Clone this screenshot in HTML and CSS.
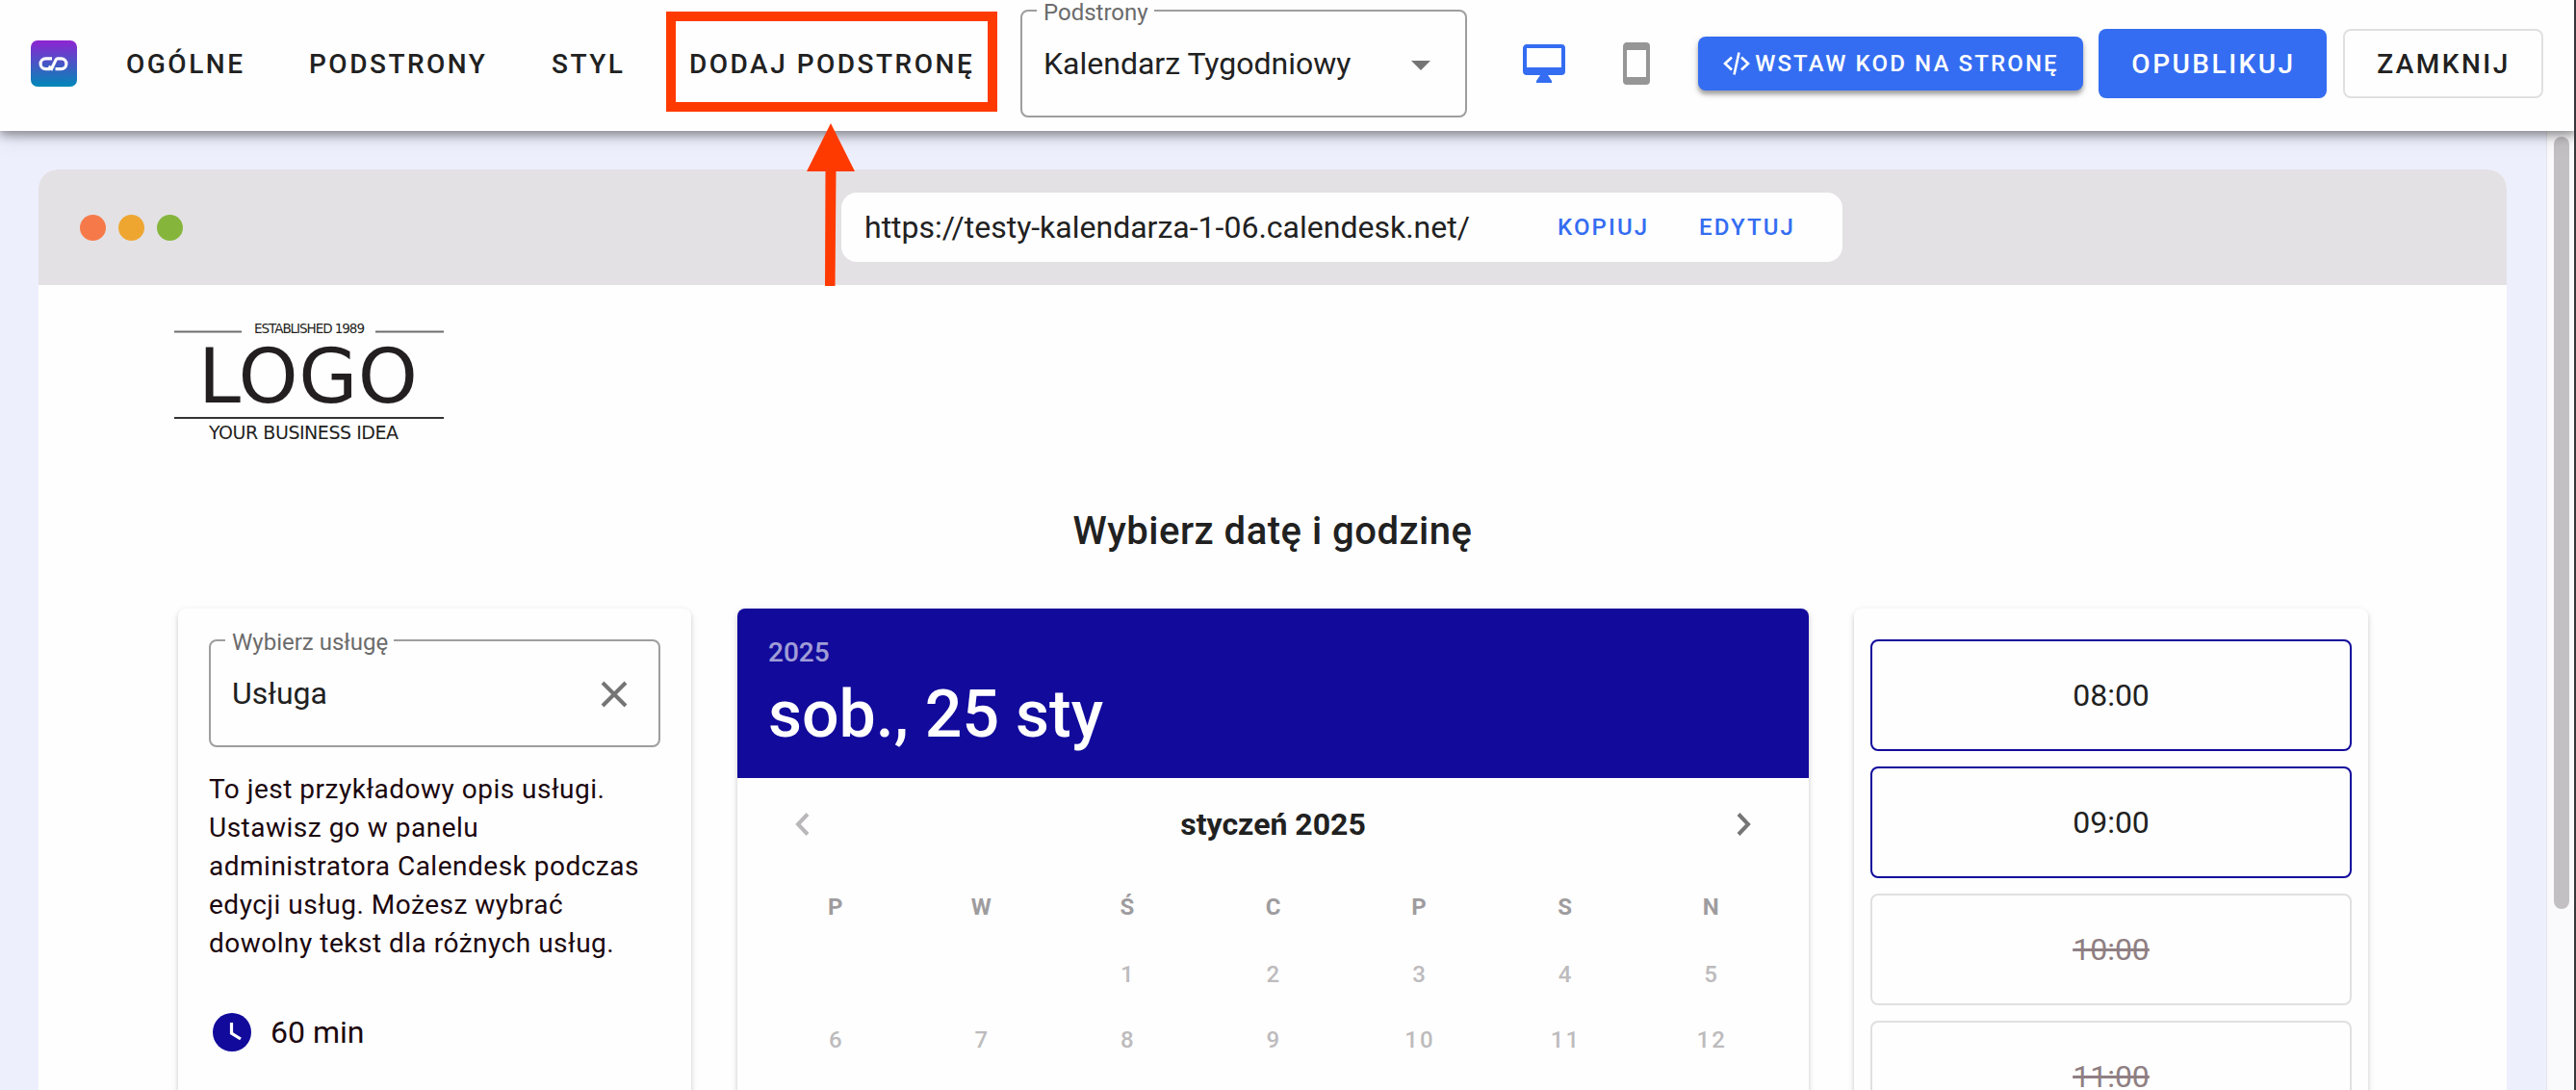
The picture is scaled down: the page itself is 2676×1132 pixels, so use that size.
FILE: index.html
```html
<!DOCTYPE html>
<html lang="pl">
<head>
<meta charset="utf-8">
<title>Calendesk</title>
<link rel="stylesheet" href="styles.css">
</head>
<body>
<header class="topbar">
  <svg class="brand" viewBox="0 0 48 48">
    <defs><linearGradient id="g" x1="0" y1="0" x2="0" y2="1"><stop offset="0" stop-color="#8e24d2"/><stop offset="1" stop-color="#0088b8"/></linearGradient></defs>
    <rect width="48" height="48" rx="7" fill="url(#g)"/>
    <path d="M22 18.800H15.500a5.400 5.400 0 0 0 0 10.800H19L20.500 26.500M20.800 31 26.200 19.900c.4-.8.900-1.100 1.800-1.100h3.500a5.400 5.400 0 0 1 0 10.800H25.500" fill="none" stroke="#fff" stroke-width="3.200"/>
  </svg>
  <nav class="menu">
    <a class="m1">OGÓLNE</a><a class="m2">PODSTRONY</a><a class="m3">STYL</a><a class="m4">DODAJ PODSTRONĘ</a>
  </nav>
  <fieldset class="field page-select">
    <legend>Podstrony</legend>
    <span>Kalendarz Tygodniowy</span>
    <svg class="caret" viewBox="0 0 20 10"><path d="M0 0h20L10 10z" fill="#757575"/></svg>
  </fieldset>
  <svg class="desktop" viewBox="1 2 22 20"><path fill="#346df1" d="M21 14H3V4h18m0-2H3c-1.110 0-2 .89-2 2v12a2 2 0 0 0 2 2h7l-2 3v1h8v-1l-2-3h7a2 2 0 0 0 2-2V4a2 2 0 0 0-2-2Z"/></svg>
  <svg class="phone" viewBox="5 1 14 22"><path fill="#969696" d="M17 19H7V5h10m0-4H7c-1.110 0-2 .89-2 2v18a2 2 0 0 0 2 2h10a2 2 0 0 0 2-2V3a2 2 0 0 0-2-2Z"/></svg>
  <button class="btn embed"><svg viewBox="0 0 28 24"><path d="M9 5.500 2 12l7 6.500M19 5.500l7 6.500-7 6.500M16.500 .5l-5 23" fill="none" stroke="#fff" stroke-width="2.600"/></svg>WSTAW KOD NA STRONĘ</button>
  <button class="btn publish">OPUBLIKUJ</button>
  <button class="btn close">ZAMKNIJ</button>
</header>
<main class="workspace">
  <section class="browser">
    <div class="titlebar">
      <div class="dots"><i class="red"></i><i class="amber"></i><i class="green"></i></div>
      <div class="url"><span class="address">https://testy-kalendarza-1-06.calendesk.net/</span><a>KOPIUJ</a><a>EDYTUJ</a></div>
    </div>
    <div class="site">
      <svg class="logo" viewBox="0 0 280 80">
        <path d="M0 10.500h70M209 10.500h71" stroke="#6d6d6d" stroke-width="2"/>
        <path d="M0 100h280" stroke="#333" stroke-width="2"/>
        <g fill="#231f20">
          <text x="83" y="11.500" font-size="13.500" textLength="115">ESTABLISHED 1989</text>
          <text x="25" y="84" font-size="79" textLength="228">LOGO</text>
          <text x="36" y="121.700" font-size="19" textLength="197">YOUR BUSINESS IDEA</text>
        </g>
      </svg>
      <h1>Wybierz datę i godzinę</h1>
      <div class="booking">
        <section class="card service">
          <fieldset class="field">
            <legend>Wybierz usługę</legend>
            <span>Usługa</span>
            <svg class="clear" viewBox="0 0 28 28"><path d="m2 2 24 24M26 2 2 26" stroke="#757575" stroke-width="4"/></svg>
          </fieldset>
          <p>To jest przykładowy opis usługi. Ustawisz go w panelu administratora Calendesk podczas edycji usług. Możesz wybrać dowolny tekst dla różnych usług.</p>
          <div class="duration"><svg viewBox="0 0 40 40"><circle cx="20" cy="20" r="20" fill="#120a9b"/><path d="M19.500 10v11l9.500 6" fill="none" stroke="#fff" stroke-width="3.200"/></svg>60 min</div>
        </section>
        <section class="card calendar">
          <div class="date"><div class="year">2025</div><div class="day">sob., 25 sty</div></div>
          <div class="month">
            <svg viewBox="0 0 15 24"><path d="M13 1.500 3 12l10 10.500" fill="none" stroke="#b9b7b9" stroke-width="4"/></svg>
            <b>styczeń 2025</b>
            <svg viewBox="0 0 15 24"><path d="m2 1.500 10 10.500L2 22.500" fill="none" stroke="#757575" stroke-width="4"/></svg>
          </div>
          <div class="week names"><span>P</span><span>W</span><span>Ś</span><span>C</span><span>P</span><span>S</span><span>N</span></div>
          <div class="week"><span></span><span></span><span>1</span><span>2</span><span>3</span><span>4</span><span>5</span></div>
          <div class="week"><span>6</span><span>7</span><span>8</span><span>9</span><span>10</span><span>11</span><span>12</span></div>
        </section>
        <section class="card slots">
          <div class="slot">08:00</div><div class="slot">09:00</div><div class="slot taken">10:00</div><div class="slot taken">11:00</div>
        </section>
      </div>
    </div>
  </section>
  <div class="scroll"><div class="thumb"></div></div>
</main>
<div class="edge"></div>
<div class="highlight"></div>
<svg class="arrow" viewBox="0 0 50 170"><path d="M25 0 50 50H30.500L29.500 169H19L19.500 50H0z" fill="#ff3a00"/></svg>
</body>
</html>
```
FILE: styles.css
```css
* { box-sizing: border-box; }
body {
  margin: 0;
  height: 1132px;
  overflow: hidden;
  position: relative;
  display: flex;
  flex-direction: column;
  font-family: Roboto, "Liberation Sans", sans-serif;
  font-size: 32px;
  color: #212121;
  background: #eeeffd;
}
svg { display: block; flex: none; }

.topbar {
  flex: none;
  height: 136px;
  padding: 0 34px 4px 32px;
  display: flex;
  align-items: center;
  background: #fefefe;
  box-shadow: 0 4px 10px rgba(0, 0, 0, .4), 0 4px 24px rgba(0, 0, 0, .12);
  position: relative;
}
.brand { width: 48px; height: 48px; }
.menu {
  width: 980px;
  display: flex;
  padding-left: 51px;
  font-size: 28px;
  font-weight: 500;
  letter-spacing: 2.5px;
  white-space: nowrap;
}
.m1 { width: 190px; }
.m2 { width: 252px; }
.m3 { width: 143px; }

.field {
  margin: 0;
  min-width: 0;
  height: 121px;
  padding: 0 22px;
  display: flex;
  align-items: center;
  justify-content: space-between;
  border: 2px solid #9e9e9e;
  border-radius: 8px;
}
.field legend {
  margin-left: -7px;
  padding: 2px 6px 0 7px;
  height: 20px;
  line-height: 20px;
  font-size: 24px;
  color: #6b6b6b;
}
.page-select { width: 464px; margin-top: -9px; }
.page-select span { margin-top: -10px; }
.caret { width: 20px; margin: -6px 14px 0 0; }
.desktop { width: 44px; margin-left: 58px; }
.phone { width: 28px; margin-left: 60px; }
.btn {
  font: 500 28px Roboto, sans-serif;
  letter-spacing: 2.5px;
  height: 72px;
  padding: 0;
  border: 0;
  border-radius: 8px;
  display: flex;
  align-items: center;
  justify-content: center;
  flex: none;
  white-space: nowrap;
  color: #fff;
  background: #346df1;
}
.embed {
  width: 400px;
  height: 56px;
  margin-left: 50px;
  padding-left: 1px;
  font-size: 24px;
  letter-spacing: 2.14px;
  box-shadow: 0 4px 4px rgba(0, 0, 0, .3), 0 3px 10px rgba(0, 0, 0, .12);
}
.embed svg { width: 28px; margin-right: 5px; }
.publish { width: 237px; margin-left: 16px; padding-left: 2px; }
.close {
  width: 208px;
  margin-left: 17px;
  padding-left: 1px;
  color: #212121;
  background: #fefefe;
  border: 2px solid #e0e0e0;
}

.workspace { flex: 1; min-height: 0; display: flex; justify-content: space-between; }
.browser {
  width: 2564px;
  margin: 40px 0 0 40px;
  display: flex;
  flex-direction: column;
  border-radius: 20px 20px 0 0;
  overflow: hidden;
  background: #fefefe;
}
.titlebar { flex: none; height: 120px; display: flex; align-items: center; background: #e3e1e4; }
.dots { display: flex; gap: 13px; margin-left: 42.500px; width: 791.500px; }
.dots i { width: 27px; height: 27px; border-radius: 50%; }
.red { background: #f67a49; }
.amber { background: #eea631; }
.green { background: #86b53c; }
.url {
  width: 1040px;
  height: 72px;
  border-radius: 16px;
  background: #fefefe;
  display: flex;
  align-items: center;
  padding-left: 24px;
}
.address { width: 720px; }
.url a { width: 147px; font-size: 24px; font-weight: 500; letter-spacing: 2.14px; color: #346df1; }

.site { flex: 1; min-height: 0; }
.logo { width: 280px; height: 80px; margin: 38px 0 0 141px; overflow: visible; font-family: "DejaVu Sans", sans-serif; }
h1 {
  margin: 114px 0 0;
  height: 48px;
  line-height: 48px;
  font-size: 40px;
  font-weight: 500;
  letter-spacing: .5px;
  text-align: center;
}
.booking { display: flex; margin: 56px 0 0 145px; height: 600px; }
.card {
  border-radius: 8px;
  background: #fefefe;
  box-shadow: 0 6px 3px -4px rgba(0, 0, 0, .12), 0 3px 5px rgba(0, 0, 0, .14), 0 2px 8px rgba(0, 0, 0, .08);
}
.service { width: 533px; padding: 23px 32px; }
.service .field span { margin-top: -10px; }
.clear { width: 28px; margin: -7px 10px 0 0; }
.service p {
  margin: 24px 0 0;
  font-size: 28px;
  line-height: 40px;
  letter-spacing: .5px;
  color: #1b070e;
}
.duration { display: flex; align-items: center; gap: 20px; margin: 52px 0 0 4px; color: #1b070e; }
.duration svg { width: 40px; }
.calendar { width: 1113px; margin-left: 48px; overflow: hidden; }
.date { height: 176px; padding: 32px; background: #120a9b; color: #fff; font-weight: 500; }
.year { font-size: 28px; line-height: 28px; opacity: .6; }
.day { font-size: 68px; line-height: 68px; margin-top: 16px; }
.month { height: 96px; padding: 0 60px; display: flex; align-items: center; justify-content: space-between; }
.month svg { width: 15px; }
.week {
  height: 68px;
  padding: 0 25px 0 27px;
  display: grid;
  grid-template-columns: repeat(7, 1fr);
  align-items: center;
  text-align: center;
  font-size: 24px;
  font-weight: 500;
  letter-spacing: 2.14px;
  color: #bdbbbd;
}
.week.names { height: 74px; padding: 2px 26px 0; font-weight: 700; color: #9e9c9e; letter-spacing: 0; }
.slots { width: 534px; margin-left: 47px; padding: 32px 17px; display: flex; flex-direction: column; gap: 16px; }
.slot {
  height: 116px;
  flex: none;
  display: flex;
  align-items: center;
  justify-content: center;
  border: 2px solid #120a9b;
  border-radius: 8px;
}
.taken { border-color: #e0e0e0; color: #8f7f83; text-decoration: line-through; }

.scroll { width: 31px; padding: 6px 0 0 7px; border-left: 1px solid #e6e4e6; background: #faf9fb; }
.thumb { width: 16px; height: 802px; border-radius: 8px; background: #c2c0c3; }
.edge { position: absolute; top: 0; right: 0; width: 2px; height: 1132px; background: #38373c; }
.highlight { position: absolute; left: 692px; top: 12px; width: 344px; height: 104px; border: 10px solid #ff3a00; }
.arrow { position: absolute; left: 838px; top: 128px; width: 50px; height: 170px; }
```
